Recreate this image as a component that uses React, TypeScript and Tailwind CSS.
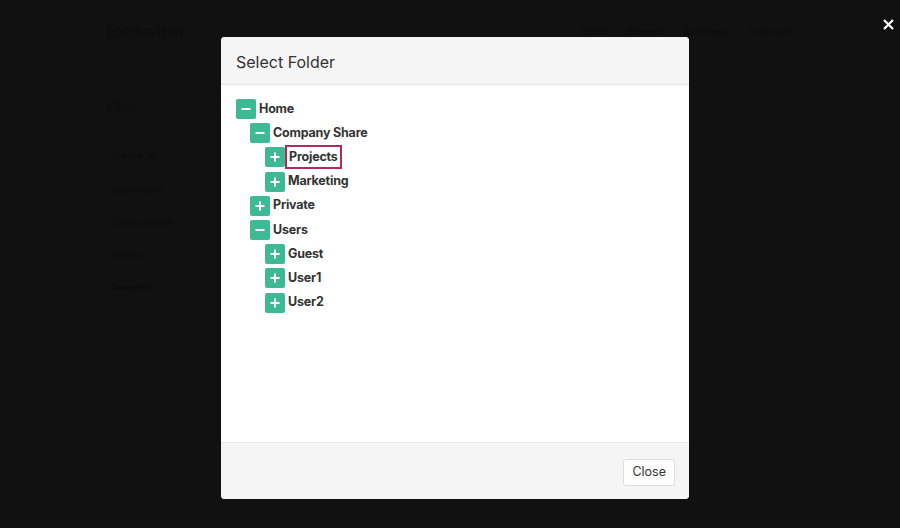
import React from "react";

type Node = { name: string; open: boolean; depth: number; selected?: boolean };

const tree: Node[] = [
  { name: "Home", open: true, depth: 0 },
  { name: "Company Share", open: true, depth: 1 },
  { name: "Projects", open: false, depth: 2, selected: true },
  { name: "Marketing", open: false, depth: 2 },
  { name: "Private", open: false, depth: 1 },
  { name: "Users", open: true, depth: 1 },
  { name: "Guest", open: false, depth: 2 },
  { name: "User1", open: false, depth: 2 },
  { name: "User2", open: false, depth: 2 },
];

const indent = ["pl-0", "pl-[14px]", "pl-[29px]"];

const Toggle = ({ open }: { open: boolean }) => (
  <span className="flex h-[20px] w-[20px] shrink-0 items-center justify-center rounded-[2px] bg-[#3dba93]">
    <svg width="10" height="10" viewBox="0 0 10 10">
      <rect x="0.5" y="4" width="9" height="2" fill="#fff" />
      {!open && <rect x="4" y="0.5" width="2" height="9" fill="#fff" />}
    </svg>
  </span>
);

// the page behind the dialog, almost black under the overlay
const Backdrop = () => (
  <div className="absolute inset-0 text-[#0d0d0d] font-bold">
    <div className="flex items-center justify-between px-[107px] pt-[18px]">
      <span className="text-[18px]">lookafter</span>
      <div className="flex gap-5 text-[11px]">
        <span>Files</span>
        <span>Shares</span>
        <span>Settings</span>
        <span>Account</span>
      </div>
    </div>
    <div className="px-[107px] pt-[52px] text-[13px]">Files</div>
    <div className="flex flex-col gap-[16px] px-[112px] pt-[30px] text-[11px]">
      <span>Name ▲</span>
      <span className="pt-[2px]">user-data</span>
      <span>Documents</span>
      <span>Notes</span>
      <span>Images</span>
    </div>
  </div>
);

export default function App() {
  return (
    <div
      className="relative h-[528px] w-[900px] overflow-hidden bg-[#111111]"
      style={{ fontFamily: "Inter, 'Noto Sans', sans-serif" }}
    >
      <Backdrop />
      <button className="absolute right-[2px] top-[14px] flex h-[20px] w-[20px] items-center justify-center">
        <svg width="11" height="11" viewBox="0 0 11 11">
          <path d="M1 1 L10 10 M10 1 L1 10" stroke="#fff" strokeWidth="2.2" />
        </svg>
      </button>
      <div className="relative ml-[221px] pt-[37px]">
        <div className="flex h-[462px] w-[468px] flex-col overflow-hidden rounded-[4px] bg-white">
          <div className="flex h-[48px] items-center border-b border-[#e3e3e3] bg-[#f5f5f5] px-[15px]">
            <h2 className="pt-[2px] text-[16px] font-normal text-[#333]">Select Folder</h2>
          </div>
          <div className="flex flex-1 flex-col gap-[4.2px] px-[15px] pt-[14px]">
            {tree.map((n) => (
              <div key={n.name} className={`flex h-[20px] items-center ${indent[n.depth]}`}>
                <Toggle open={n.open} />
                <span
                  className={`flex h-[24px] items-center text-[12.5px] font-bold tracking-[-0.2px] text-[#333] ${
                    n.selected ? "ml-0 border-2 border-[#b22a60] px-[2px]" : "ml-[2px] px-[1px]"
                  }`}
                >
                  {n.name}
                </span>
              </div>
            ))}
          </div>
          <div className="flex h-[57px] items-center justify-end border-t border-[#e8e8e8] bg-[#f5f5f5] px-[14px] pt-[2px]">
            <button className="h-[27px] rounded-[3px] border border-[#dddddd] bg-white px-[8px] text-[12.5px] text-[#333]">
              Close
            </button>
          </div>
        </div>
      </div>
    </div>
  );
}
